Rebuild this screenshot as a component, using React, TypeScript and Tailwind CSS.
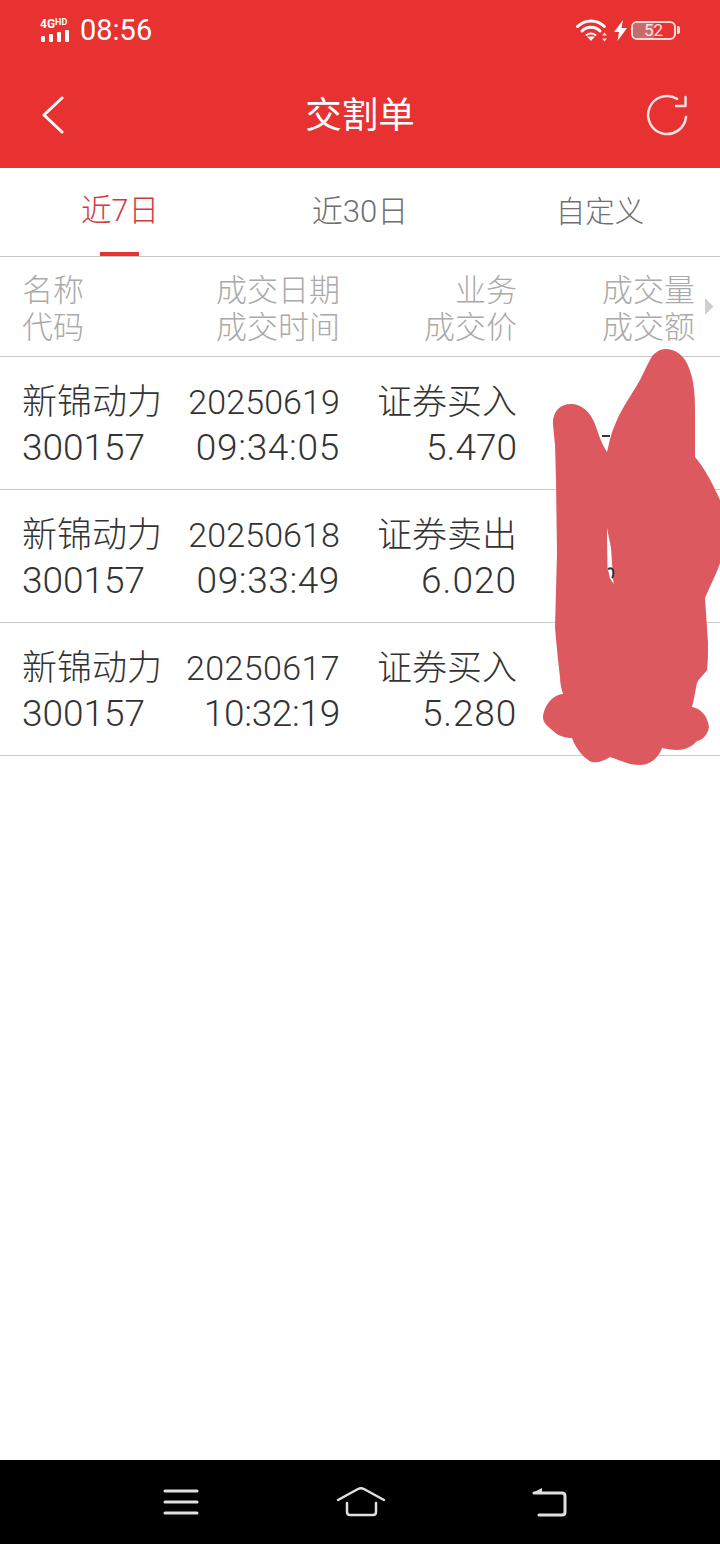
const rows = [
  { name: "新锦动力", code: "300157", date: "20250619", dateTrack: "tracking-[0.1px]", time: "09:34:05", timeTrack: "tracking-[0.7px]", biz: "证券买入", price: "5.470", priceTrack: "tracking-[0px]" },
  { name: "新锦动力", code: "300157", date: "20250618", dateTrack: "tracking-[0.1px]", time: "09:33:49", timeTrack: "tracking-[0.6px]", biz: "证券卖出", price: "6.020", priceTrack: "tracking-[1px]" },
  { name: "新锦动力", code: "300157", date: "20250617", dateTrack: "tracking-[0.4px]", time: "10:32:19", timeTrack: "tracking-[-0.3px]", biz: "证券买入", price: "5.280", priceTrack: "tracking-[0.8px]" },
];

function Signal() {
  return (
    <div className="flex flex-col items-start w-[30px]">
      <div className="flex items-start h-[12px] text-white font-bold leading-[12px]">
        <span className="text-[12px]">4G</span>
        <span className="text-[9px] leading-[9px]">HD</span>
      </div>
      <svg width="30" height="12" viewBox="0 0 30 12" fill="#fff" className="ml-[1px]">
        <rect x="0" y="6" width="4" height="6" rx="1" />
        <rect x="8" y="4" width="4" height="8" rx="1" />
        <rect x="16" y="2" width="4" height="10" rx="1" />
        <rect x="24" y="0" width="4" height="12" rx="1" />
      </svg>
    </div>
  );
}

function StatusRight() {
  return (
    <div className="flex items-center">
      <svg width="32" height="24" viewBox="0 0 32 24" fill="none" stroke="#fff" strokeWidth="3" strokeLinecap="round">
        <path d="M1.500 8.500C9 1 21 1 28.500 8.500" />
        <path d="M6 13C11 8 19 8 24 13" />
        <path d="M10.500 17C13 15 17 15 19.500 17" strokeWidth="2" />
        <path d="M11 18.500h8L15 23z" fill="#fff" stroke="none" />
        <path d="M28.500 14.500l2.500 3h-5zM28.500 23.500l2.500-3h-5z" fill="#fff" stroke="none" opacity="0.85" />
      </svg>
      <svg width="13" height="21" viewBox="0 0 13 21" fill="#fff" className="ml-[6px]">
        <path d="M9 0L0 12h5L3.500 21 13 8H7.500z" />
      </svg>
      <div className="relative ml-[4px] w-[45px] h-[19px] rounded-[6px] border-2 border-[#f6dcdc] overflow-hidden flex items-center justify-center">
        <div className="absolute left-0 top-0 bottom-0 w-[52%] bg-[#c96a6c]" />
        <span className="relative text-[17px] leading-none text-[#f5e6e6] font-normal">52</span>
      </div>
      <div className="w-[3px] h-[8px] ml-[1px] rounded-r-[2px] bg-[#f6dcdc]" />
    </div>
  );
}

export default function App() {
  return (
    <div className="relative w-[720px] min-h-[1544px] flex flex-col bg-white overflow-hidden font-['Roboto','Noto_Sans_CJK_SC',sans-serif] font-light">
      <header className="h-[168px] bg-[#e83131] flex flex-col shrink-0">
        <div className="flex items-center justify-between pl-[40px] pr-[40px] pt-[8px] h-[52px]">
          <div className="flex items-center gap-[10px]">
            <Signal />
            <span className="text-[29px] leading-none text-white font-normal">08:56</span>
          </div>
          <StatusRight />
        </div>
        <div className="grid grid-cols-[1fr_auto_1fr] items-center px-[42px] mt-[19px] h-[88px]">
          <svg width="24" height="38" viewBox="0 0 24 38" fill="none" stroke="#fff" strokeWidth="3" strokeLinecap="round" strokeLinejoin="round">
            <path d="M20 2L2 19l18 17" />
          </svg>
          <span className="text-[36.500px] leading-none text-white font-normal pt-[3px]">交割单</span>
          <svg width="44" height="44" viewBox="0 0 44 44" fill="none" stroke="#f7e3e3" strokeWidth="2.500" strokeLinecap="round" strokeLinejoin="round" className="justify-self-end translate-x-[10px]">
            <path d="M42 24A19 19 0 1 1 33 5.800" />
            <path d="M32 13h9.500V4" />
          </svg>
        </div>
      </header>

      <nav className="grid grid-cols-3 h-[89px] border-b border-[#c8c8c8] shrink-0">
        <div className="relative flex items-center justify-center pb-[2px] text-[30.500px] text-[#d23a3a]">
          近7日
          <div className="absolute bottom-0 left-[100px] w-[39px] h-[4px] bg-[#e83131]" />
        </div>
        <div className="flex items-center justify-center text-[31px] text-[#6f6f6f]">近30日</div>
        <div className="flex items-center justify-center text-[29.500px] text-[#6f6f6f]">自定义</div>
      </nav>

      <div className="relative grid grid-cols-[138px_180px_177px_178px] pl-[22px] h-[100px] pt-[15px] border-b border-[#c8c8c8] text-[31px] leading-[37px] text-[#aaaaaa] shrink-0">
        <div>名称<br />代码</div>
        <div className="text-right">成交日期<br />成交时间</div>
        <div className="text-right">业务<br />成交价</div>
        <div className="text-right">成交量<br />成交额</div>
        <svg width="9" height="17" viewBox="0 0 9 17" fill="#cfcfcf" className="absolute left-[705px] top-[41px]">
          <path d="M0 0l8.500 8.500L0 17z" />
        </svg>
      </div>

      {rows.map((r) => (
        <div key={r.date} className="grid grid-cols-[138px_180px_177px_178px] pl-[22px] h-[133px] pt-[23px] border-b border-[#c8c8c8] text-[#333333] leading-[45px] shrink-0">
          <div>
            <div className="text-[35px] whitespace-nowrap">{r.name}</div>
            <div className="text-[37px]">{r.code}</div>
          </div>
          <div className="text-right">
            <div className={`text-[34px] ${r.dateTrack}`}>{r.date}</div>
            <div className={`text-[37px] ${r.timeTrack}`}>{r.time}</div>
          </div>
          <div className="text-right">
            <div className="text-[35px]">{r.biz}</div>
            <div className={`text-[37px] ${r.priceTrack}`}>{r.price}</div>
          </div>
          <div />
        </div>
      ))}

      <div className="flex-1" />

      <footer className="h-[84px] bg-black shrink-0 flex items-center justify-between pl-[162px] pr-[153px]">
        <svg width="37" height="30" viewBox="0 0 37 30" fill="none" stroke="#e0e0e0" strokeWidth="3" strokeLinecap="round">
          <path d="M3 4h32M3 15h32M3 26h32" />
        </svg>
        <svg width="50" height="32" viewBox="0 0 50 32" fill="none" stroke="#e0e0e0" strokeWidth="2.500" strokeLinecap="round" strokeLinejoin="round" className="-translate-x-[4px]">
          <path d="M2 14L22 3c2-1 4-1 6 0l20 11" />
          <path d="M11 17v9c0 2 1 3 3 3h23c2 0 3-1 3-3v-9" />
        </svg>
        <svg width="36" height="30" viewBox="0 0 36 30" fill="none" stroke="#e0e0e0" strokeWidth="3" strokeLinecap="round" strokeLinejoin="round">
          <path d="M3 6h28c2 0 3 1 3 3v16c0 2-1 3-3 3H8" />
          <path d="M11 1L1.500 6 11 7z" fill="#e0e0e0" stroke="none" />
        </svg>
      </footer>

      <svg className="absolute left-0 top-0 pointer-events-none" width="720" height="800" viewBox="0 0 720 800">
        <path
          fill="#dc5a5f"
          d="M553 425C552 412 560 404 571 404C582 404 590 412 595 424C598 432 601 443 607 452C609 445 610 435 617 420C622 408 632 394 640 380C645 370 650 359 653 355C657 351 661 349 665 349C676 349 685 356 689 368C694 380 695 395 695 410L695 457C703 466 712 482 720 500V563C718 570 712 582 705 598L708 643C708 655 708 662 707 670C703 676 699 678 697 683C695 692 694 700 692 707C700 708 708 716 709 727C708 734 703 740 697 741C692 747 684 750 677 750C672 750 667 749 662 748C660 755 652 765 640 765C628 765 620 760 610 757C604 761 598 763 592 762C586 760 576 750 572 738C565 738 558 736 552 730C546 725 543 722 543 717C544 706 552 695 563 694C561 688 560 682 560 677C558 660 556 640 555 627L557 553L556 480L555 445Z"
        />
        <path fill="#ffffff" d="M607 528L611 548L612.500 570L613.500 584L610 578L607.500 568L607 540Z" />
        <path fill="none" stroke="#333" strokeWidth="2" d="M608 569c2-1 4-1 5 1c1 3 0 7-1 8" />
        <path fill="none" stroke="#333" strokeWidth="2" d="M602 436h8" />
      </svg>
    </div>
  );
}
